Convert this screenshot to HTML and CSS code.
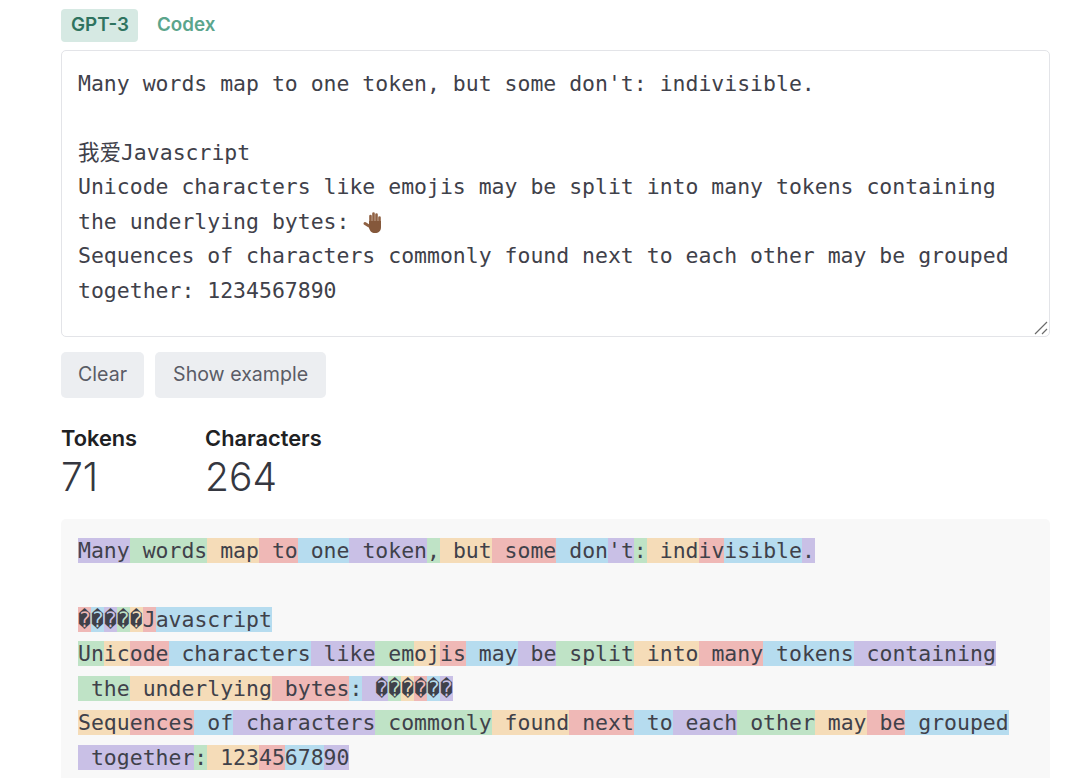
FILE: index.html
```html
<!DOCTYPE html>
<html lang="en">
<head>
<meta charset="utf-8">
<title>Tokenizer</title>
<link rel="stylesheet" href="styles.css">
</head>
<body>
<main class="page">
  <nav class="tabs">
    <span class="tab tab-active">GPT-3</span>
    <span class="tab">Codex</span>
  </nav>
  <div class="editor">
<pre class="mono">Many words map to one token, but some don't: indivisible.

我爱Javascript
Unicode characters like emojis may be split into many tokens containing
the underlying bytes: <svg class="hand" viewBox="0 0 22 24" aria-hidden="true"><g fill="none" stroke="#8f6143" stroke-linecap="round"><path d="M8.500 12V6M11.500 11V3.500M14.500 11V4.500M17.500 12V7.500" stroke-width="2.600"/><path d="M3 13.500l4 2.500" stroke-width="3"/></g><path d="M7 11h12v6c0 4-2.500 6-6 6s-5-2-6-5z" fill="#85583b"/></svg>
Sequences of characters commonly found next to each other may be grouped
together: 1234567890</pre>
    <svg class="grip" viewBox="0 0 14 14" aria-hidden="true"><path d="M1 13L13 1M8 13l5-5" stroke="#6b6b6b" stroke-width="1.200" fill="none"/></svg>
  </div>
  <div class="actions">
    <button class="btn">Clear</button>
    <button class="btn btn-wide">Show example</button>
  </div>
  <div class="stats">
    <div class="stat"><div class="stat-label">Tokens</div><div class="stat-value">71</div></div>
    <div class="stat"><div class="stat-label">Characters</div><div class="stat-value">264</div></div>
  </div>
  <div class="output">
<pre class="mono"><span class="p">Many</span><span class="g"> words</span><span class="o"> map</span><span class="r"> to</span><span class="b"> one</span><span class="p"> token</span><span class="g">,</span><span class="o"> but</span><span class="r"> some</span><span class="b"> don</span><span class="p">'t</span><span class="g">:</span><span class="o"> ind</span><span class="r">iv</span><span class="b">isible</span><span class="p">.</span>

<span class="r">�</span><span class="b">�</span><span class="p">�</span><span class="g">�</span><span class="o">�</span><span class="r">J</span><span class="b">avascript</span>
<span class="g">Un</span><span class="o">ic</span><span class="r">ode</span><span class="b"> characters</span><span class="p"> like</span><span class="g"> em</span><span class="o">oj</span><span class="r">is</span><span class="b"> may</span><span class="p"> be</span><span class="g"> split</span><span class="o"> into</span><span class="r"> many</span><span class="b"> tokens</span><span class="p"> containing</span>
<span class="g"> the</span><span class="o"> underlying</span><span class="r"> bytes</span><span class="b">:</span><span class="p"> �</span><span class="g">�</span><span class="o">�</span><span class="r">�</span><span class="b">�</span><span class="p">�</span>
<span class="o">Sequ</span><span class="r">ences</span><span class="b"> of</span><span class="p"> characters</span><span class="g"> commonly</span><span class="o"> found</span><span class="r"> next</span><span class="b"> to</span><span class="p"> each</span><span class="g"> other</span><span class="o"> may</span><span class="r"> be</span><span class="b"> grouped</span>
<span class="p"> together</span><span class="g">:</span><span class="o"> 123</span><span class="r">45</span><span class="b">678</span><span class="p">90</span></pre>
  </div>
</main>
</body>
</html>
```
FILE: styles.css
```css
html, body {
  margin: 0;
  height: 100%;
  overflow: hidden;
  background: #fff;
}
body {
  font-family: Inter, "Noto Sans", sans-serif;
  color: #202123;
}
.page {
  width: 989px;
  margin-left: 61px;
  padding-top: 9px;
  display: flex;
  flex-direction: column;
}
.tabs {
  display: flex;
  height: 33px;
  margin-bottom: 8px;
}
.tab {
  display: flex;
  align-items: center;
  padding: 0 9px 2px 10px;
  margin-right: 9px;
  border-radius: 4px;
  font-size: 18.800px;
  font-weight: 600;
  color: #5ba58c;
}
.tab-active {
  background: #d6e9e3;
  color: #2f7360;
}
.mono {
  margin: 0;
  font-family: "DejaVu Sans Mono", "Noto Sans CJK SC", monospace;
  font-size: 21.480px;
  line-height: 34.500px;
  color: #3f414a;
  white-space: pre;
}
.editor {
  position: relative;
  box-sizing: border-box;
  height: 287px;
  padding: 15.600px 16px;
  border: 1px solid #e3e4e8;
  border-radius: 5px;
}
.hand {
  width: 22px;
  height: 24px;
  vertical-align: -5px;
}
.grip {
  position: absolute;
  right: 1px;
  bottom: 1px;
  width: 14px;
  height: 14px;
}
.actions {
  display: flex;
  gap: 11px;
  margin-top: 15px;
}
.btn {
  height: 46px;
  padding: 0 17px 2px;
  border: 0;
  border-radius: 5px;
  background: #eceef1;
  color: #5a5c66;
  font-family: inherit;
  font-size: 19.600px;
}
.btn-wide {
  padding: 0 18px 2px;
}
.stats {
  display: flex;
  gap: 68px;
  margin-top: 27px;
}
.stat-label {
  font-size: 21.800px;
  font-weight: 600;
  line-height: 26px;
}
.stat-value {
  font-size: 39px;
  font-weight: 300;
  line-height: 52px;
  color: #353740;
}
.output {
  margin-top: 16px;
  padding: 14.500px 16px 40px 17px;
  background: #f8f8f8;
  border-radius: 5px;
}
.p { background: #c9c0e6; }
.g { background: #bfe3c6; }
.o { background: #f5dcb8; }
.r { background: #efb8b6; }
.b { background: #b6dcef; }
```
